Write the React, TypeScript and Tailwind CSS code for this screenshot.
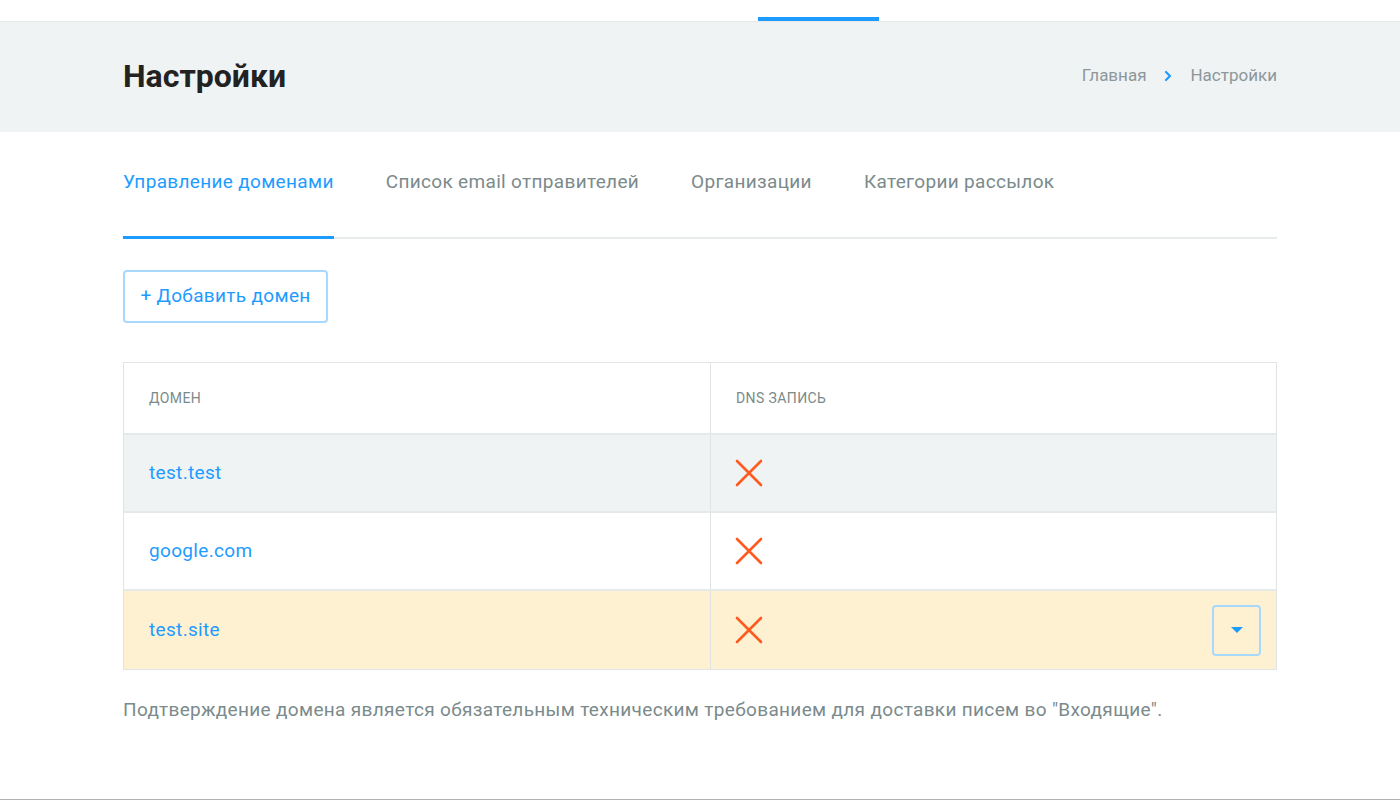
import React from 'react';

const domains = [
  { name: 'test.test', bg: 'bg-[#f0f3f4]', menu: false },
  { name: 'google.com', bg: 'bg-white', menu: false },
  { name: 'test.site', bg: 'bg-[#fef1d2]', menu: true },
];

const tabs = ['Управление доменами', 'Список email отправителей', 'Организации', 'Категории рассылок'];

function Cross() {
  return (
    <svg width="28" height="28" viewBox="0 0 28 28" fill="none">
      <path d="M2 2L26 26M26 2L2 26" stroke="#ff5a1f" strokeWidth="2.6" strokeLinecap="round" />
    </svg>
  );
}

export default function App() {
  return (
    <div className="min-h-[800px] bg-white font-['Roboto',sans-serif] border-b border-[#b3b3b3]">
      {/* top strip */}
      <div className="h-[22px] flex items-end border-b border-[#e6e8e9]">
        <div className="ml-[758px] w-[121px] h-[4px] bg-[#1e9bff]" />
      </div>

      {/* page header */}
      <div className="bg-[#f0f3f4] h-[110px]">
        <div className="w-[1154px] mx-auto h-full flex items-center justify-between pb-[3px]">
          <h1 className="text-[32px] font-bold text-[#222] leading-none">Настройки</h1>
          <div className="flex items-center text-[17px] text-[#8d979a]">
            <span>Главная</span>
            <svg className="mx-[17px]" width="10" height="12" viewBox="0 0 10 12" fill="none">
              <path d="M3 2L7 6L3 10" stroke="#1e9bff" strokeWidth="2.2" strokeLinecap="round" strokeLinejoin="round" />
            </svg>
            <span>Настройки</span>
          </div>
        </div>
      </div>

      <div className="w-[1154px] mx-auto">
        {/* tabs */}
        <div className="flex gap-[52px] border-b-2 border-[#e8ebec] h-[107px]">
          {tabs.map((t, i) => (
            <div
              key={t}
              className={`pt-[36px] text-[19px] tracking-[0.33px] -mb-[2px] ${
                i === 0 ? 'text-[#1e9bff] border-b-[3px] border-[#1e9bff]' : 'text-[#7b8a8b]'
              }`}
            >
              {t}
            </div>
          ))}
        </div>

        {/* add button */}
        <div className="pt-[31px]">
          <button className="h-[53px] w-[205px] border-2 border-[#a9d8ff] rounded-[4px] text-[19px] tracking-[0.33px] text-[#1e9bff] bg-white">
            + Добавить домен
          </button>
        </div>

        {/* table */}
        <div className="mt-[39px] border border-[#e1e5e6]">
          <div className="flex h-[72px] border-b-2 border-[#e6e9ea]">
            <div className="w-[587px] border-r border-[#dfe3e4] flex items-center pl-[25px] text-[14px] tracking-[0.4px] text-[#7b8a8b] uppercase">
              Домен
            </div>
            <div className="flex-1 flex items-center pl-[25px] text-[14px] tracking-[0.4px] text-[#7b8a8b] uppercase">
              DNS запись
            </div>
          </div>
          {domains.map((d, i) => (
            <div
              key={d.name}
              className={`flex h-[78px] ${d.bg} ${i < domains.length - 1 ? 'border-b-2 border-[#e6e9ea]' : ''}`}
            >
              <div className="w-[587px] border-r border-[#dfe3e4] flex items-center pl-[25px] text-[19px] tracking-[0.33px] text-[#1e9bff]">
                {d.name}
              </div>
              <div className="flex-1 flex items-center justify-between pl-[24px] pr-[15px]">
                <Cross />
                {d.menu && (
                  <button className="w-[49px] h-[51px] border-2 border-[#a9d8ff] rounded-[4px] flex items-center justify-center">
                    <svg width="14" height="8" viewBox="0 0 14 8">
                      <path d="M1 1H13L7 7Z" fill="#1e9bff" />
                    </svg>
                  </button>
                )}
              </div>
            </div>
          ))}
        </div>

        <p className="mt-[26px] text-[19px] tracking-[0.33px] text-[#7b8a8b]">
          Подтверждение домена является обязательным техническим требованием для доставки писем во "Входящие".
        </p>
      </div>
    </div>
  );
}
